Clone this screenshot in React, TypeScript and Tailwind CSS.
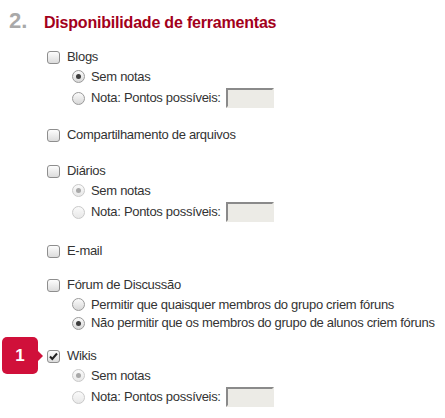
import React from "react";

type RadioOpt = {
  label: string;
  checked?: boolean;
  points?: boolean;
  h: string;
};

type Tool = {
  label: string;
  checked?: boolean;
  disabled?: boolean;
  mt: string;
  options?: RadioOpt[];
};

const tools: Tool[] = [
  {
    label: "Blogs",
    mt: "mt-0",
    options: [
      { label: "Sem notas", checked: true, h: "h-[19px]" },
      { label: "Nota: Pontos possíveis:", points: true, h: "h-[24px]" },
    ],
  },
  { label: "Compartilhamento de arquivos", mt: "mt-[15px]" },
  {
    label: "Diários",
    mt: "mt-[16px]",
    disabled: true,
    options: [
      { label: "Sem notas", checked: true, h: "h-[19px]" },
      { label: "Nota: Pontos possíveis:", points: true, h: "h-[24px]" },
    ],
  },
  { label: "E-mail", mt: "mt-[17px]" },
  {
    label: "Fórum de Discussão",
    mt: "mt-[14px]",
    options: [
      { label: "Permitir que quaisquer membros do grupo criem fóruns", h: "h-[19px]" },
      { label: "Não permitir que os membros do grupo de alunos criem fóruns", checked: true, h: "h-[18px]" },
    ],
  },
  {
    label: "Wikis",
    mt: "mt-[14px]",
    checked: true,
    disabled: true,
    options: [
      { label: "Sem notas", checked: true, h: "h-[19px]" },
      { label: "Nota: Pontos possíveis:", points: true, h: "h-[24px]" },
    ],
  },
];

function Checkbox({ checked }: { checked?: boolean }) {
  return (
    <span className="relative w-[13px] h-[13px] rounded-[3px] border border-[#8e8e8e] bg-gradient-to-b from-[#fdfdfd] to-[#dcdcdc] shrink-0">
      {checked && (
        <svg viewBox="0 0 13 13" className="absolute -left-px -top-px w-[13px] h-[13px]">
          <path d="M3 6.5 L5.3 9 L10 3.5" fill="none" stroke="#222" strokeWidth="2" />
        </svg>
      )}
    </span>
  );
}

function Radio({ checked, disabled }: { checked?: boolean; disabled?: boolean }) {
  return (
    <span
      className={
        disabled
          ? "flex items-center justify-center w-[13px] h-[13px] rounded-full border border-[#c9c9c9] bg-gradient-to-b from-[#fafafa] to-[#e8e8e8] shrink-0"
          : "flex items-center justify-center w-[13px] h-[13px] rounded-full border border-[#9a9a9a] bg-gradient-to-b from-[#fbfbfb] to-[#d8d8d8] shrink-0"
      }
    >
      {checked && (
        <span
          className={
            disabled
              ? "w-[5px] h-[5px] rounded-full bg-[#a8a8a8]"
              : "w-[5px] h-[5px] rounded-full bg-[#3c3c3c]"
          }
        />
      )}
    </span>
  );
}

export default function App() {
  return (
    <div
      className="w-[445px] h-[418px] bg-white text-[13px] tracking-[-0.3px] text-[#333] overflow-hidden"
      style={{ fontFamily: '"Liberation Sans", Arial, sans-serif' }}
    >
      {/* Section heading */}
      <div className="flex items-baseline h-[34px] pt-[4px] pl-[9px]">
        <span className="text-[22px] font-bold text-[#a9a9a9] w-[35px] tracking-normal">2.</span>
        <h2 className="text-[16px] font-bold text-[#a3001b] tracking-[-0.2px]">Disponibilidade de ferramentas</h2>
      </div>

      <div className="pt-[13px] pl-[47px]">
        {tools.map((tool) => (
          <div key={tool.label} className={`relative ${tool.mt}`}>
            {tool.label === "Wikis" && (
              <div className="absolute -left-[45px] -top-[9px] flex items-center">
                <div className="w-[36px] h-[37px] rounded-[5px] bg-[#d0103a] flex items-center justify-center text-white text-[17px] font-bold tracking-normal">
                  1
                </div>
                <div className="w-0 h-0 border-y-[5px] border-y-transparent border-l-[5px] border-l-[#d0103a]" />
              </div>
            )}
            <label className="flex items-center h-[20px] gap-[7px]">
              <Checkbox checked={tool.checked} />
              <span>{tool.label}</span>
            </label>
            {tool.options?.map((opt) => (
              <div key={opt.label} className={`flex items-center pl-[25px] gap-[6px] ${opt.h}`}>
                <Radio checked={opt.checked} disabled={tool.disabled} />
                <span className="whitespace-nowrap">{opt.label}</span>
                {opt.points && (
                  <span className="ml-[-1px] w-[48px] h-[20px] bg-[#ecebe6] border-2 border-t-[#8a8a8a] border-l-[#8a8a8a] border-r-[#ecebe6] border-b-[#ecebe6]" />
                )}
              </div>
            ))}
          </div>
        ))}
      </div>
    </div>
  );
}
